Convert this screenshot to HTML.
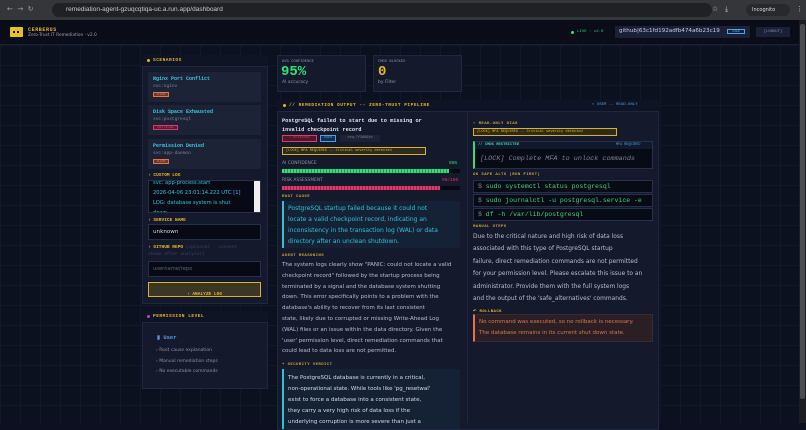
<!DOCTYPE html>
<html><head><meta charset="utf-8"><style>
*{box-sizing:border-box;margin:0;padding:0}
body{width:806px;height:423px;overflow:hidden;background:#0c1020;font-family:"DejaVu Sans",sans-serif;color:#c8ccd8;position:relative}
.a{position:absolute}
.mono{font-family:"Liberation Mono",monospace}
.chrome{left:0;top:0;width:806px;height:20px;background:#35363a}
.url{left:52px;top:3px;width:660px;height:14px;border-radius:7px;background:#202124;color:#c9c9c9;font-size:6.5px;line-height:14px;padding-left:14px;font-family:"Liberation Sans",sans-serif}
.hdr{left:0;top:20px;width:799px;height:25px;background:#0a0c17;border-bottom:1px solid #1c2236}
.grid{left:0;top:45px;width:799px;height:378px;background-color:#0c1120;background-image:linear-gradient(#121829 1px,transparent 1px),linear-gradient(90deg,#121829 1px,transparent 1px);background-size:20px 20px}
.panel{background:#141a2c;border:1px solid #1f2740}
.ph{font-family:"Liberation Mono",monospace;font-size:4.5px;font-weight:bold;color:#e3b72d;letter-spacing:.5px}
.card{background:#1c2337;left:148px;width:113px}
.ct{font-family:"Liberation Mono",monospace;font-size:5px;font-weight:bold;color:#3ec7e0;position:absolute;left:5px;top:4px}
.cs{font-family:"Liberation Mono",monospace;font-size:4.5px;color:#7c8397;position:absolute;left:5px;top:12px}
.tag{position:absolute;left:5px;top:20px;font-family:"Liberation Mono",monospace;font-size:3.5px;padding:0 3px;height:5px;line-height:5px}
.lbl{font-family:"Liberation Mono",monospace;font-size:4.5px;font-weight:bold;color:#e3b72d}
.inp{background:#070a14;border:1px solid #283049;left:148px;width:113px}
.txt{font-size:5.5px;line-height:10.8px;color:#b9bdcb;white-space:nowrap}
.sec{font-family:"Liberation Mono",monospace;font-size:4px;font-weight:bold;color:#c9a23a;letter-spacing:.4px}
.cmd{left:473px;width:180px;height:13px;background:#070b15;border:1px solid #263049;font-family:"Liberation Mono",monospace;font-size:6.5px;color:#3fd47a;line-height:11px;padding-left:4px}
</style></head><body>
<div class="a chrome"></div>
<div class="a" style="left:7px;top:5px;color:#9aa0a6;font-size:7px">← &nbsp;→ &nbsp;↻</div>
<div class="a url">remediation-agent-gzuqcqtiqa-uc.a.run.app/dashboard</div>
<div class="a" style="left:712px;top:5px;color:#ccc;font-size:7px">☆ &nbsp; ⤓</div>
<div class="a" style="left:746px;top:4px;width:44px;height:12px;border-radius:6px;background:#28292c;color:#ddd;font-size:5px;line-height:12px;padding-left:6px">Incognito</div>
<div class="a" style="left:796px;top:5px;color:#ccc;font-size:7px">⋮</div>
<div class="a hdr"></div>
<div class="a" style="left:10px;top:27px;width:13px;height:10px;background:#e8c21e;border-radius:1px"><div class="a" style="left:3px;top:4px;width:2px;height:2px;background:#111"></div><div class="a" style="left:7px;top:4px;width:2px;height:2px;background:#111"></div></div>
<div class="a mono" style="left:28px;top:27px;font-size:5px;font-weight:bold;color:#e3b72d;letter-spacing:.6px">CERBERUS</div>
<div class="a" style="left:28px;top:33px;font-size:4.3px;color:#9aa1b4">Zero-Trust IT Remediation · v2.0</div>
<div class="a" style="left:571px;top:31px;width:3px;height:3px;border-radius:50%;background:#2fe07a"></div>
<div class="a mono" style="left:577px;top:30px;font-size:4px;color:#2fcf70">LIVE · v2.0</div>
<div class="a" style="left:615px;top:26px;width:135px;height:12px;background:#1a2036"></div>
<div class="a" style="left:619px;top:28px;font-size:5.6px;color:#c9cde0">github|63c1fd192adfb474a6b23c19</div>
<div class="a mono" style="left:727px;top:29px;width:18px;height:5px;border:1px solid #4fa6e0;color:#4fa6e0;font-size:3px;text-align:center;line-height:4px">USER</div>
<div class="a mono" style="left:756px;top:27px;width:34px;height:10px;background:#1a2036;color:#8c93a8;font-size:3.8px;text-align:center;line-height:10px">[LOGOUT]</div>
<div class="a" style="left:799px;top:20px;width:7px;height:403px;background:#1b1d22"></div>
<div class="a" style="left:800px;top:24px;width:5px;height:375px;background:#4a4c52;border-radius:2px"></div>
<div class="a grid"></div>

<!-- left panel -->
<div class="a panel" style="left:142px;top:55px;width:126px;height:249px"></div>
<div class="a" style="left:142px;top:55px;width:126px;height:12px;background:#0f1424;border-bottom:1px solid #1f2740"></div>
<div class="a" style="left:147px;top:59px;width:3px;height:3px;border-radius:50%;background:#e3b72d"></div>
<div class="a ph" style="left:153px;top:58px">SCENARIOS</div>
<div class="a card" style="top:72px;height:30px"><div class="ct">Nginx Port Conflict</div><div class="cs">svc:nginx</div><div class="tag" style="background:#6b3a2a;border:1px solid #e0744a;color:#e0744a">HIGH</div></div>
<div class="a card" style="top:105px;height:30px"><div class="ct">Disk Space Exhausted</div><div class="cs">svc:postgresql</div><div class="tag" style="background:#5a1c33;border:1px solid #e0386a;color:#e0386a">CRITICAL</div></div>
<div class="a card" style="top:139px;height:30px"><div class="ct">Permission Denied</div><div class="cs">svc:app-daemon</div><div class="tag" style="background:#6b3a2a;border:1px solid #e0744a;color:#e0744a">HIGH</div></div>
<div class="a lbl" style="left:148px;top:173px">› CUSTOM LOG</div>
<div class="a inp" style="top:180px;height:33px;overflow:hidden"><div class="a" style="left:4px;top:-3px;font-size:5.2px;line-height:10px;color:#2fc0d8;width:100px;white-space:nowrap">svc: app-process.start<br>2026-04-06 23:01:14.222 UTC [1]<br>LOG: database system is shut<br>down</div><div class="a" style="right:0;top:0;width:6px;height:31px;background:#f0f0f0"></div></div>
<div class="a lbl" style="left:148px;top:218px">› SERVICE NAME</div>
<div class="a inp" style="top:224px;height:16px;font-size:5.6px;color:#d8dbe6;line-height:14px;padding-left:4px">unknown</div>
<div class="a lbl" style="left:148px;top:245px">› GITHUB REPO <span style="color:#3a4260;font-weight:normal">(optional · consent</span></div>
<div class="a mono" style="left:148px;top:252px;font-size:4.5px;color:#3a4260">shown after analysis)</div>
<div class="a inp" style="top:261px;height:16px;font-size:5.2px;color:#5d6479;line-height:14px;padding-left:4px">username/repo</div>
<div class="a" style="left:148px;top:282px;width:113px;height:15px;background:#3c3624;border:1px solid #d8b22a;text-align:center;line-height:13px" ><span class="lbl">› ANALYZE LOG</span></div>

<div class="a panel" style="left:142px;top:311px;width:126px;height:78px"></div>
<div class="a" style="left:142px;top:311px;width:126px;height:12px;background:#0f1424;border-bottom:1px solid #1f2740"></div>
<div class="a" style="left:147px;top:315px;width:3px;height:3px;border-radius:50%;background:#c13ee0"></div>
<div class="a ph" style="left:153px;top:314px">PERMISSION LEVEL</div>
<div class="a mono" style="left:157px;top:334px;font-size:5.5px;font-weight:bold;color:#4aa0e8">▮ User</div>
<div class="a" style="left:156px;top:346px;font-size:4.5px;line-height:10.7px;color:#8a91a5;white-space:nowrap">› Root cause explanation<br>› Manual remediation steps<br>› No executable commands</div>

<!-- stats -->
<div class="a panel" style="left:277px;top:55px;width:89px;height:37px"></div>
<div class="a mono" style="left:282px;top:60px;font-size:3.8px;color:#8a91a5">AVG CONFIDENCE</div>
<div class="a mono" style="left:281px;top:64px;font-size:14px;font-weight:bold;color:#2fe07a">95%</div>
<div class="a" style="left:282px;top:80px;font-size:4.5px;color:#8a91a5">AI accuracy</div>
<div class="a panel" style="left:373px;top:55px;width:89px;height:37px"></div>
<div class="a mono" style="left:378px;top:60px;font-size:3.8px;color:#8a91a5">CMDS BLOCKED</div>
<div class="a mono" style="left:378px;top:64px;font-size:14px;font-weight:bold;color:#e3b72d">0</div>
<div class="a" style="left:378px;top:80px;font-size:4.5px;color:#8a91a5">by Filter</div>

<!-- main panel -->
<div class="a panel" style="left:277px;top:100px;width:382px;height:330px"></div>
<div class="a" style="left:277px;top:100px;width:382px;height:12px;background:#0f1424;border-bottom:1px solid #1f2740"></div>
<div class="a" style="left:283px;top:104px;width:3px;height:3px;border-radius:50%;background:#e3b72d"></div>
<div class="a ph" style="left:289px;top:103px">// REMEDIATION OUTPUT -- ZERO-TRUST PIPELINE</div>
<div class="a mono" style="left:592px;top:103px;font-size:4px;color:#4aa0e8">▪ USER -- READ-ONLY</div>
<div class="a" style="left:467px;top:112px;width:1px;height:311px;background:#1f2740"></div>

<div class="a mono" style="left:282px;top:117px;font-size:5.3px;font-weight:bold;color:#e3e6ef;line-height:9px">PostgreSQL failed to start due to missing or<br>invalid checkpoint record</div>
<div class="a mono" style="left:282px;top:135px;width:35px;height:7px;border:1px solid #e0386a;background:#4a1a2c;color:#e0386a;font-size:3.5px;text-align:center;line-height:5px">! critical</div>
<div class="a mono" style="left:320px;top:135px;width:16px;height:7px;border:1px solid #4aa0e8;background:#16304a;color:#4aa0e8;font-size:3.5px;text-align:center;line-height:5px">USER</div>
<div class="a mono" style="left:340px;top:135px;width:40px;height:7px;background:#1c2337;color:#7c8397;font-size:3.5px;text-align:center;line-height:7px">req:7f36894b</div>
<div class="a mono" style="left:282px;top:147px;width:144px;height:8px;border:1px solid #d8b22a;background:#2e2a1c;color:#e3b72d;font-size:3.6px;line-height:6px;padding-left:3px">[LOCK] MFA REQUIRED -- Critical severity detected</div>
<div class="a" style="left:282px;top:161px;font-size:4.4px;color:#8a91a5">AI CONFIDENCE</div>
<div class="a mono" style="left:449px;top:161px;font-size:4.5px;color:#2fe07a">95%</div>
<div class="a" style="left:282px;top:169px;width:178px;height:4px;background:#070a14"><div style="width:94%;height:4px;background:repeating-linear-gradient(90deg,#2fe07a 0 2px,#1e9e56 2px 3px)"></div></div>
<div class="a" style="left:282px;top:178px;font-size:4.4px;color:#8a91a5">RISK ASSESSMENT</div>
<div class="a mono" style="left:442px;top:178px;font-size:4.5px;color:#e0386a">90/100</div>
<div class="a" style="left:282px;top:186px;width:178px;height:4px;background:#070a14"><div style="width:89%;height:4px;background:repeating-linear-gradient(90deg,#e0386a 0 2px,#a02550 2px 3px)"></div></div>
<div class="a sec" style="left:282px;top:195px">ROOT CAUSE</div>
<div class="a" style="left:282px;top:201px;width:178px;height:47px;background:#152236;border-left:2px solid #2fc0d8"></div>
<div class="a txt" style="left:288px;top:203px;color:#2fc0d8;font-size:6px;line-height:11px">PostgreSQL startup failed because it could not<br>locate a valid checkpoint record, indicating an<br>inconsistency in the transaction log (WAL) or data<br>directory after an unclean shutdown.</div>
<div class="a sec" style="left:282px;top:254px">AGENT REASONING</div>
<div class="a txt" style="left:282px;top:260px">The system logs clearly show "PANIC: could not locate a valid<br>checkpoint record" followed by the startup process being<br>terminated by a signal and the database system shutting<br>down. This error specifically points to a problem with the<br>database's ability to recover from its last consistent<br>state, likely due to corrupted or missing Write-Ahead Log<br>(WAL) files or an issue within the data directory. Given the<br>'user' permission level, direct remediation commands that<br>could lead to data loss are not permitted.</div>
<div class="a sec" style="left:282px;top:363px">+ SECURITY VERDICT</div>
<div class="a" style="left:282px;top:369px;width:178px;height:60px;background:#152236;border-left:2px solid #2fc0d8"></div>
<div class="a txt" style="left:288px;top:373px;color:#d8dbe6;font-size:5.5px;line-height:11px">The PostgreSQL database is currently in a critical,<br>non-operational state. While tools like 'pg_resetwal'<br>exist to force a database into a consistent state,<br>they carry a very high risk of data loss if the<br>underlying corruption is more severe than just a</div>

<!-- right col -->
<div class="a sec" style="left:473px;top:122px">▪ READ-ONLY DIAG</div>
<div class="a mono" style="left:473px;top:128px;width:144px;height:8px;border:1px solid #d8b22a;background:#2e2a1c;color:#e3b72d;font-size:3.6px;line-height:6px;padding-left:3px">[LOCK] MFA REQUIRED -- Critical severity detected</div>
<div class="a" style="left:473px;top:141px;width:180px;height:28px;background:#070b15;border:1px solid #263049;border-left:2px solid #2fe07a"></div>
<div class="a" style="left:475px;top:142px;width:177px;height:7px;background:#101a2c"></div>
<div class="a mono" style="left:478px;top:143px;font-size:3.8px;font-weight:bold;color:#3fd4a0">// CMDS RESTRICTED</div>
<div class="a mono" style="left:616px;top:143px;font-size:3.4px;color:#4aa0e8">MFA REQUIRED</div>
<div class="a mono" style="left:480px;top:155px;font-size:6.8px;font-style:italic;color:#7c8397">[LOCK] Complete MFA to unlock commands</div>
<div class="a sec" style="left:473px;top:173px">OK SAFE ALTS (RUN FIRST)</div>
<div class="a cmd" style="top:180px"><span style="color:#7c8397">$</span> sudo systemctl status postgresql</div>
<div class="a cmd" style="top:194px"><span style="color:#7c8397">$</span> sudo journalctl -u postgresql.service -e</div>
<div class="a cmd" style="top:208px"><span style="color:#7c8397">$</span> df -h /var/lib/postgresql</div>
<div class="a sec" style="left:473px;top:225px">MANUAL STEPS</div>
<div class="a txt" style="left:473px;top:231px;line-height:12.4px;font-size:5.9px">Due to the critical nature and high risk of data loss<br>associated with this type of PostgreSQL startup<br>failure, direct remediation commands are not permitted<br>for your permission level. Please escalate this issue to an<br>administrator. Provide them with the full system logs<br>and the output of the 'safe_alternatives' commands.</div>
<div class="a sec" style="left:473px;top:308px;color:#e3b72d">↶ ROLLBACK</div>
<div class="a" style="left:473px;top:314px;width:180px;height:28px;background:#2a1f24;border:1px solid #3a2a2a;border-left:2px solid #e0744a"></div>
<div class="a txt" style="left:479px;top:317px;color:#e0744a;font-size:5.5px;line-height:10.5px">No command was executed, so no rollback is necessary.<br>The database remains in its current shut down state.</div>
</body></html>
